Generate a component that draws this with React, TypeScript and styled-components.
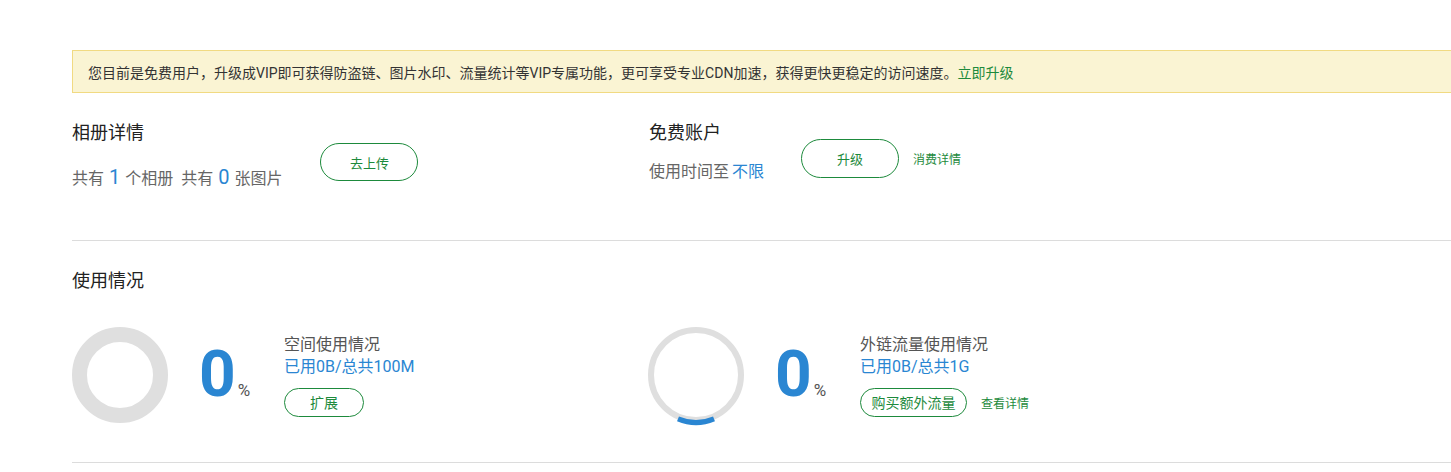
import React from "react";
import styled, { createGlobalStyle } from "styled-components";

const GREEN = "#1d8a3c";
const BLUE = "#2a86d2";

const Global = createGlobalStyle`
  html, body { margin: 0; padding: 0; background: #fff; overflow: hidden; }
  body { font-family: Roboto, "Noto Sans CJK SC", sans-serif; color: #333; }
`;

const Page = styled.div`
  width: 1440px;
  margin-left: 72px;
  padding-top: 50px;
`;

const Notice = styled.div`
  height: 41px;
  display: flex;
  align-items: center;
  padding-left: 15px;
  background: #faf4d3;
  border: 1px solid #f1da82;
  font-size: 14px;
  color: #333;
`;

const NoticeLink = styled.a`
  color: ${GREEN};
  text-decoration: none;
  cursor: pointer;
`;

const Overview = styled.div`
  display: grid;
  grid-template-columns: 577px 1fr;
  height: 119px;
  margin-top: 28px;
  border-bottom: 1px solid #dcdcdc;
`;

const Block = styled.div`
  display: flex;
  align-items: flex-start;
`;

const Info = styled.div`
  display: flex;
  flex-direction: column;
`;

const Heading = styled.div`
  font-size: 18px;
  line-height: 24px;
  color: #222;
`;

const Stat = styled.div<{ $gap: number }>`
  margin-top: ${(p) => p.$gap}px;
  font-size: 16px;
  line-height: 24px;
  color: #666;
  white-space: nowrap;
`;

const Num = styled.span<{ $big?: boolean }>`
  color: ${BLUE};
  font-size: ${(p) => (p.$big ? 20 : 16)}px;
  margin: 0 ${(p) => (p.$big ? 5 : 3)}px;
`;

const Actions = styled.div<{ $top: number; $left: number }>`
  display: flex;
  align-items: center;
  margin-left: ${(p) => p.$left}px;
  margin-top: ${(p) => p.$top}px;
  gap: 14px;
`;

const Pill = styled.button<{ $w: number; $h: number; $fs: number }>`
  box-sizing: border-box;
  width: ${(p) => p.$w}px;
  height: ${(p) => p.$h}px;
  border: 1px solid ${GREEN};
  border-radius: ${(p) => p.$h / 2}px;
  background: #fff;
  color: ${GREEN};
  font-family: Roboto, "Noto Sans CJK SC", sans-serif;
  font-size: ${(p) => p.$fs}px;
  padding: 0;
  cursor: pointer;
`;

const SmallLink = styled.a`
  font-size: 12px;
  color: ${GREEN};
  text-decoration: none;
  cursor: pointer;
  white-space: nowrap;
`;

const Usage = styled.div`
  padding-top: 28px;
  padding-bottom: 39px;
  border-bottom: 1px solid #dcdcdc;
`;

const UsageGrid = styled.div`
  display: grid;
  grid-template-columns: 576px 1fr;
  margin-top: 34px;
`;

const UsageItem = styled.div`
  display: flex;
  align-items: center;
`;

const Ring = styled.svg`
  width: 96px;
  height: 96px;
  overflow: visible;
  flex: none;
`;

const Percent = styled.div`
  width: 85px;
  margin-left: 31px;
  white-space: nowrap;
  line-height: 1;
`;

const Big = styled.span`
  font-size: 64px;
  font-weight: 700;
  color: ${BLUE};
`;

const Unit = styled.span`
  font-size: 17px;
  color: #555;
  margin-left: 2px;
`;

const UsageInfo = styled.div`
  display: flex;
  flex-direction: column;
  align-items: flex-start;
`;

const UsageTitle = styled.div`
  font-size: 16px;
  line-height: 22px;
  color: #555;
`;

const UsageAmount = styled.div`
  font-size: 16px;
  line-height: 22px;
  color: ${BLUE};
`;

const UsageActions = styled.div`
  display: flex;
  align-items: center;
  gap: 14px;
  margin-top: 10px;
`;

function ThickRing() {
  return (
    <Ring viewBox="0 0 96 96">
      <circle cx="48" cy="48" r="40.5" fill="none" stroke="#dfdfdf" strokeWidth="15" />
    </Ring>
  );
}

function ThinRing() {
  return (
    <Ring viewBox="0 0 96 96">
      <circle cx="48" cy="48" r="45" fill="none" stroke="#dfdfdf" strokeWidth="6" />
      <path d="M 30 91.9 A 47 47 0 0 0 66 91.9" fill="none" stroke={BLUE} strokeWidth="5" />
    </Ring>
  );
}

export default function App() {
  return (
    <>
      <Global />
      <Page>
        <Notice>
          您目前是免费用户，升级成VIP即可获得防盗链、图片水印、流量统计等VIP专属功能，更可享受专业CDN加速，获得更快更稳定的访问速度。
          <NoticeLink>立即升级</NoticeLink>
        </Notice>

        <Overview>
          <Block>
            <Info>
              <Heading>相册详情</Heading>
              <Stat $gap={20}>
                共有<Num $big>1</Num>个相册&nbsp;&nbsp;共有<Num $big>0</Num>张图片
              </Stat>
            </Info>
            <Actions $top={22} $left={38}>
              <Pill $w={98} $h={38} $fs={13}>去上传</Pill>
            </Actions>
          </Block>
          <Block>
            <Info>
              <Heading>免费账户</Heading>
              <Stat $gap={15}>
                使用时间至<Num>不限</Num>
              </Stat>
            </Info>
            <Actions $top={18} $left={34}>
              <Pill $w={98} $h={39} $fs={13}>升级</Pill>
              <SmallLink>消费详情</SmallLink>
            </Actions>
          </Block>
        </Overview>

        <Usage>
          <Heading>使用情况</Heading>
          <UsageGrid>
            <UsageItem>
              <ThickRing />
              <Percent>
                <Big>0</Big>
                <Unit>%</Unit>
              </Percent>
              <UsageInfo>
                <UsageTitle>空间使用情况</UsageTitle>
                <UsageAmount>已用0B/总共100M</UsageAmount>
                <UsageActions>
                  <Pill $w={80} $h={29} $fs={14}>扩展</Pill>
                </UsageActions>
              </UsageInfo>
            </UsageItem>
            <UsageItem>
              <ThinRing />
              <Percent>
                <Big>0</Big>
                <Unit>%</Unit>
              </Percent>
              <UsageInfo>
                <UsageTitle>外链流量使用情况</UsageTitle>
                <UsageAmount>已用0B/总共1G</UsageAmount>
                <UsageActions>
                  <Pill $w={107} $h={29} $fs={14}>购买额外流量</Pill>
                  <SmallLink>查看详情</SmallLink>
                </UsageActions>
              </UsageInfo>
            </UsageItem>
          </UsageGrid>
        </Usage>
      </Page>
    </>
  );
}
